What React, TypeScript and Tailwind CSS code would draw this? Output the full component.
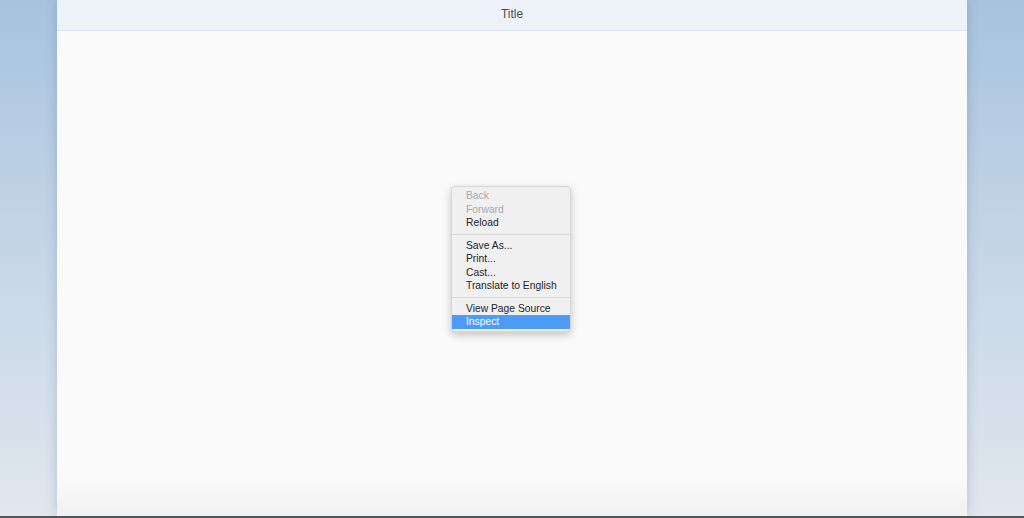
const items: ({ label: string; disabled?: boolean; active?: boolean } | "sep")[] = [
  { label: "Back", disabled: true },
  { label: "Forward", disabled: true },
  { label: "Reload" },
  "sep",
  { label: "Save As..." },
  { label: "Print..." },
  { label: "Cast..." },
  { label: "Translate to English" },
  "sep",
  { label: "View Page Source" },
  { label: "Inspect", active: true },
];

function ContextMenu() {
  return (
    <div className="absolute left-[394px] top-[186px] w-[120px] rounded-[4px] border border-[#d6d6d6] bg-[#f0f0f0] pt-[2px] pb-[2px] shadow-[0_3px_8px_rgba(0,0,0,0.22)]">
      {items.map((it, i) =>
        it === "sep" ? (
          <div key={i} className="flex h-[9px] items-center">
            <div className="h-px w-full bg-[#d9d9d9]" />
          </div>
        ) : (
          <div
            key={i}
            className={`flex h-[13.5px] items-center pl-[14px] pt-px text-[10.3px] leading-none ${
              it.active
                ? "bg-[#4c9bf6] text-white"
                : it.disabled
                  ? "text-[#a9a9a9]"
                  : "text-[#242424]"
            }`}
          >
            {it.label}
          </div>
        ),
      )}
    </div>
  );
}

export default function App() {
  return (
    <div
      className="relative flex h-[518px] w-[1024px] flex-col overflow-hidden bg-gradient-to-b from-[#a7c3df] via-[#c6d6e7] to-[#e1e7ee]"
      style={{ fontFamily: '"Liberation Sans", Arial, sans-serif' }}
    >
      <div className="flex flex-1 justify-center">
        <div className="relative flex w-[910px] flex-col shadow-[0_0_10px_rgba(60,80,110,0.25)]">
          <div className="flex h-[31px] shrink-0 items-center justify-center border-b border-[#dbe4f0] bg-[#edf2f8] pb-[2px] text-[12px] text-[#4d4d4d]">
            Title
          </div>
          <div className="flex-1 bg-gradient-to-b from-[#fafafa] from-92% to-[#f1f1f1]" />
          <ContextMenu />
        </div>
      </div>
      <div className="h-[2px] shrink-0 bg-[#555555]" />
    </div>
  );
}
